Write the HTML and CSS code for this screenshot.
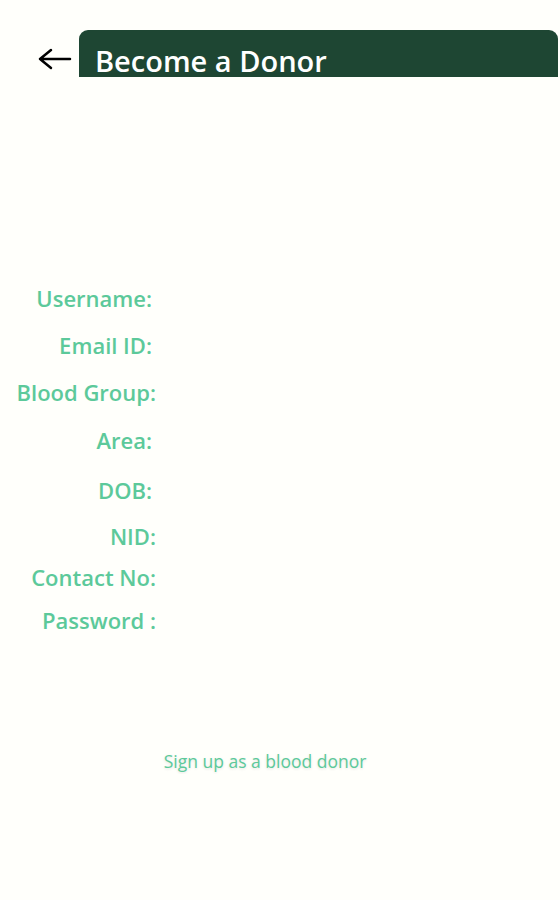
FILE: index.html
```html
<!DOCTYPE html>
<html lang="en">
<head>
    <meta charset="UTF-8">
    <meta name="viewport" content="width=device-width, initial-scale=1.0">
    <title>Become a Donor</title>
    <link rel="stylesheet" href="styles.css">
</head>
<body>

<div class="topbar">
    <button class="back" type="button" aria-label="Back">
        <svg width="34" height="24" viewBox="0 0 34 24">
            <path d="M32 12 H2 M13 3 L2 12 L13 21" fill="none" stroke="#000" stroke-width="2.5" stroke-linecap="round" stroke-linejoin="round"/>
        </svg>
    </button>
    <div class="title-bar">
        <h1>Become a Donor</h1>
    </div>
</div>

<form class="donor-form">
    <div class="row"><label>Username:</label></div>
    <div class="row"><label>Email ID:</label></div>
    <div class="row r3"><label class="wide">Blood Group:</label></div>
    <div class="row r4"><label>Area:</label></div>
    <div class="row r5"><label>DOB:</label></div>
    <div class="row r6"><label class="wide">NID:</label></div>
    <div class="row r7"><label class="wide">Contact No:</label></div>
    <div class="row r8"><label class="wide">Password :</label></div>

    <div class="actions">
        <button class="signup" type="button">Sign up as a blood donor</button>
    </div>
</form>

</body>
</html>
```

FILE: styles.css
```css
html, body {
    margin: 0;
    padding: 0;
    background: #fffffb;
    font-family: "Open Sans", "Noto Sans", sans-serif;
}
.topbar {
    display: flex;
    align-items: flex-start;
    padding-top: 30px;
}
.back {
    border: 0;
    background: none;
    padding: 0;
    margin: 17px 0 0 38px;
    width: 41px;
    height: 24px;
    cursor: pointer;
    text-align: left;
}
.title-bar {
    flex: 1;
    height: 47px;
    margin-right: 2px;
    background: #1e4633;
    border-radius: 9px 9px 0 0;
}
.title-bar h1 {
    margin: 0;
    padding: 16px 0 0 16px;
    color: #fff;
    font-size: 29px;
    font-weight: 600;
    line-height: 29px;
}
.donor-form {
    padding-top: 206px;
}
.row {
    display: flex;
    align-items: center;
    height: 30px;
    margin-top: 17px;
}
.row:first-child {
    margin-top: 0;
}
.row label {
    width: 152px;
    text-align: right;
    color: #5cc99a;
    font-size: 22px;
    font-weight: 600;
    line-height: 30px;
    white-space: nowrap;
}
.row label.wide {
    width: 156px;
}
/* les écarts entre les lignes ne sont pas réguliers */
.row.r3 { margin-top: 17px; }
.row.r4 { margin-top: 18px; }
.row.r5 { margin-top: 20px; }
.row.r6 { margin-top: 16px; }
.row.r7 { margin-top: 11px; }
.row.r8 { margin-top: 13px; }
.actions {
    display: flex;
    justify-content: center;
    padding-top: 113px;
    padding-right: 30px;
}
.signup {
    border: 0;
    background: none;
    padding: 1px 6px;
    color: #5cc99a;
    font-family: inherit;
    font-size: 17.5px;
    line-height: 24px;
    text-shadow: 0 1px 3px rgba(0, 0, 0, 0.12);
    cursor: pointer;
}
```
